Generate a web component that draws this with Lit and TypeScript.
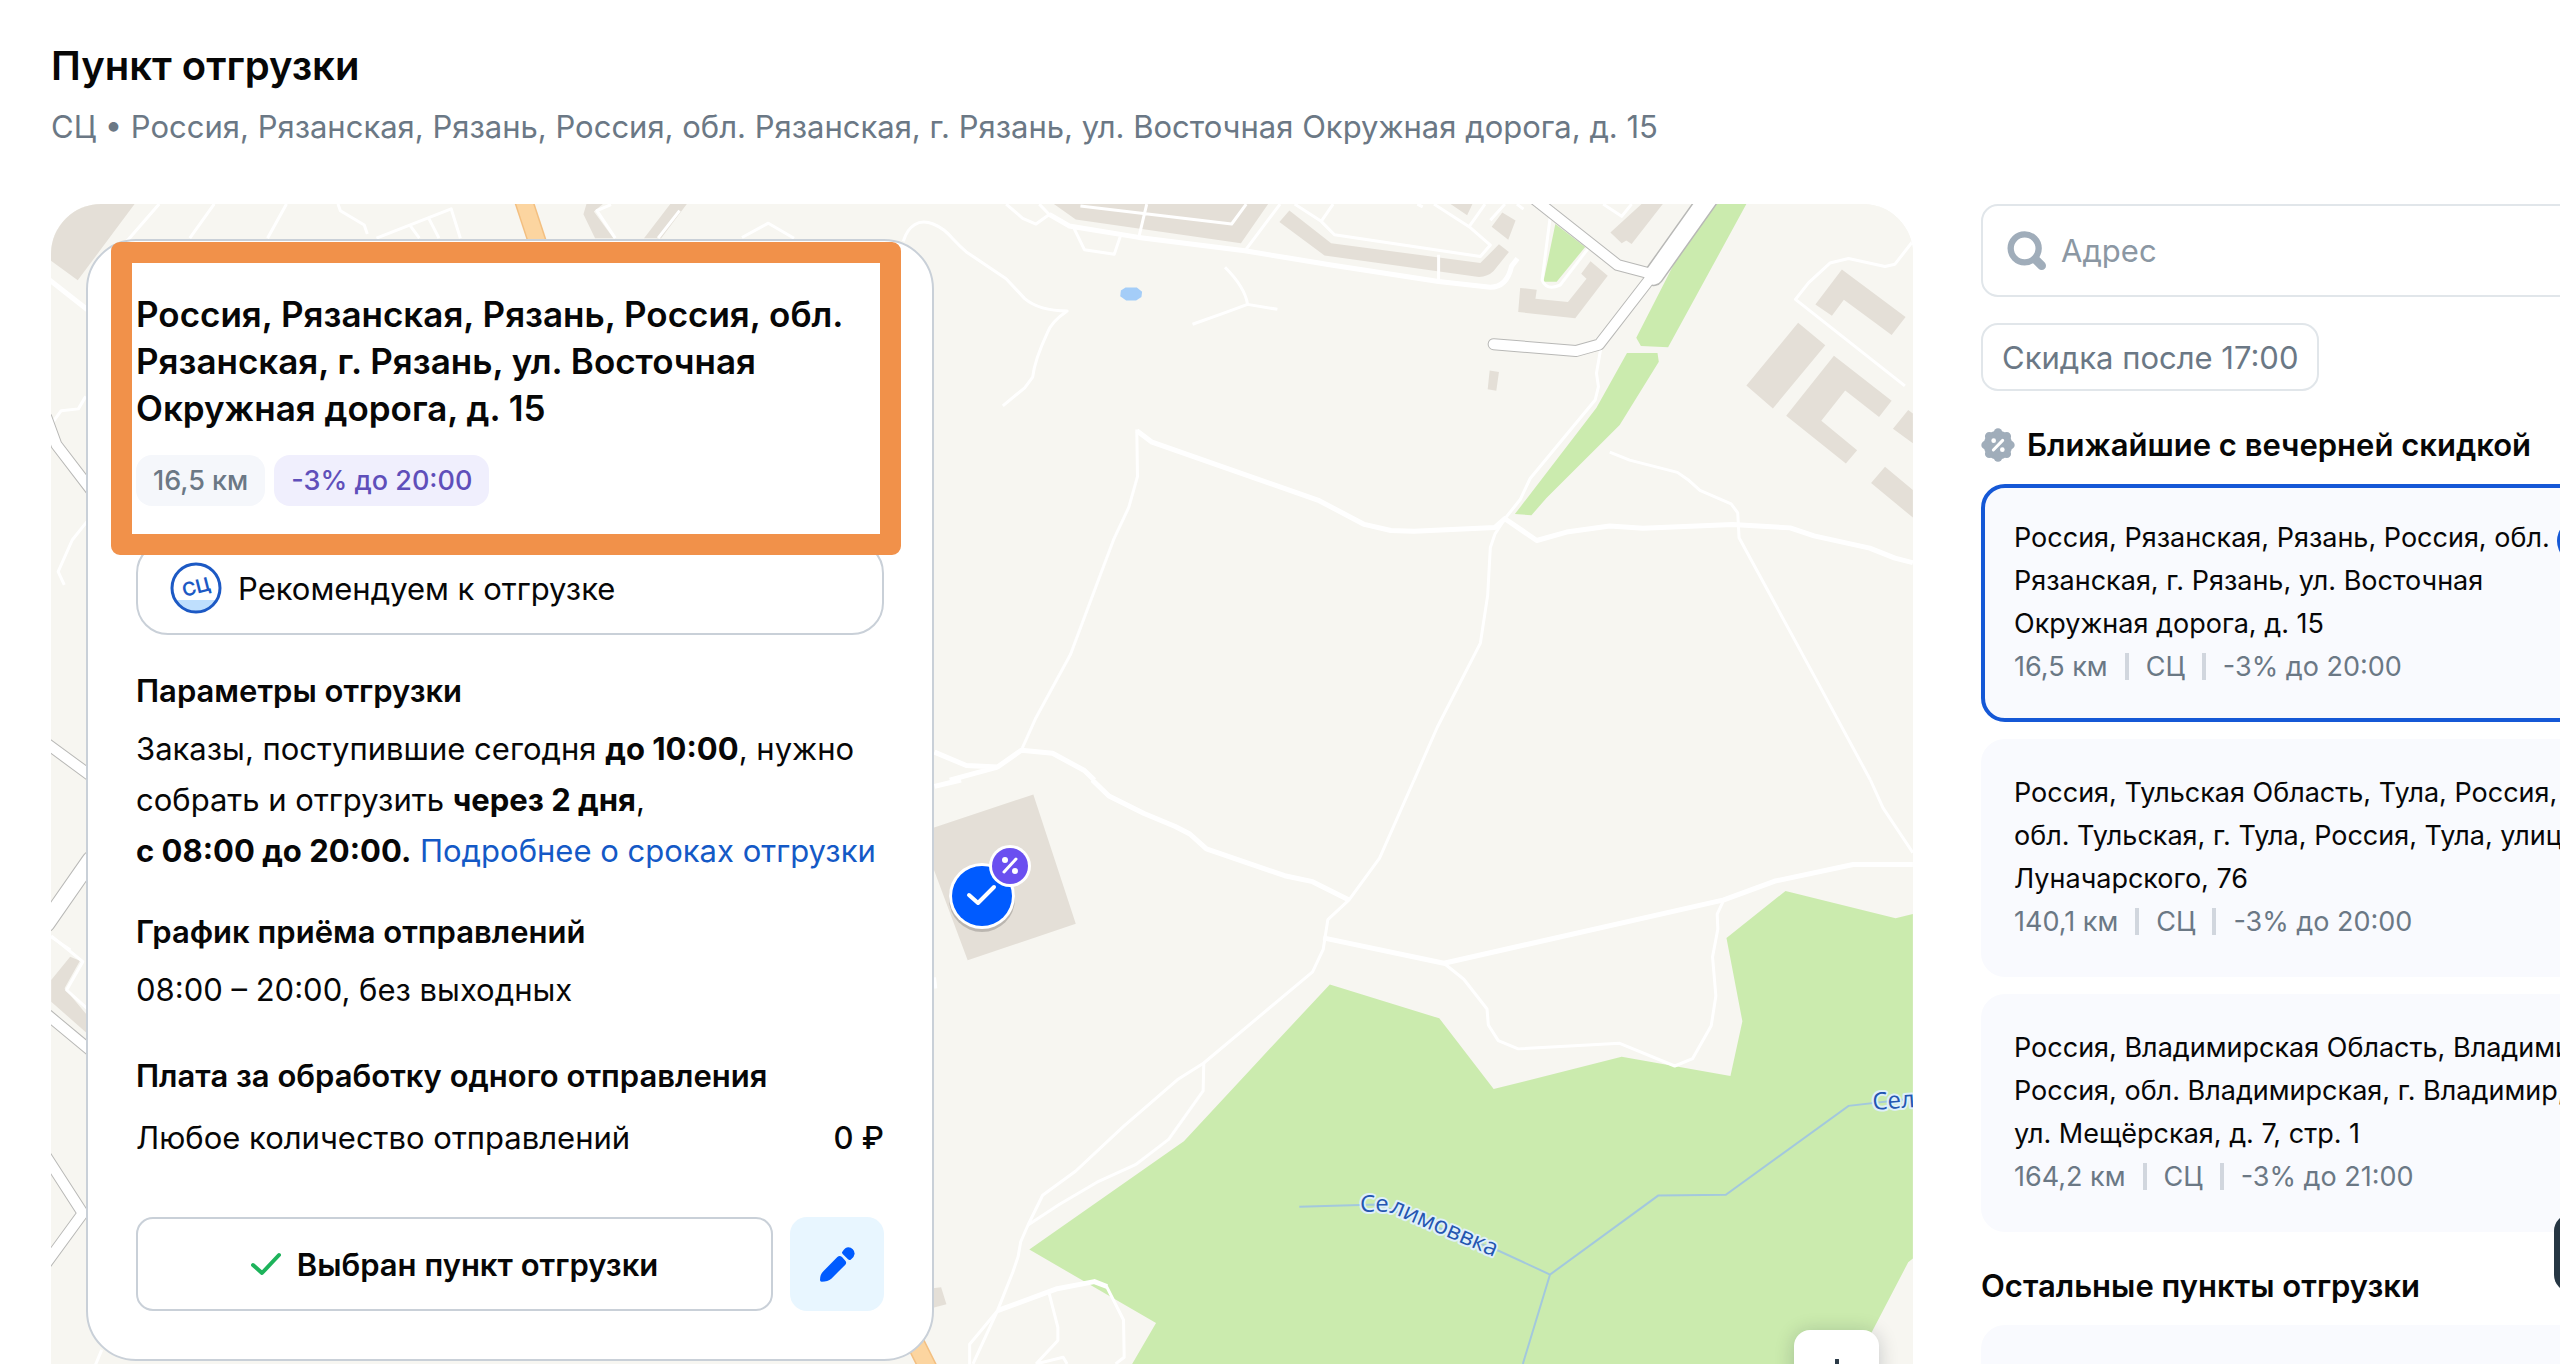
import {LitElement, html, svg, css, nothing} from "lit";
import {customElement, property, state} from "lit/decorators.js";
import {classMap} from "lit/directives/class-map.js";

interface Point {
  lines: string[];
  distance: string;
  discount: string;
}

const NEAREST: Point[] = [
  {
    lines: ["Россия, Рязанская, Рязань, Россия, обл.", "Рязанская, г. Рязань, ул. Восточная", "Окружная дорога, д. 15"],
    distance: "16,5 км",
    discount: "-3% до 20:00",
  },
  {
    lines: ["Россия, Тульская Область, Тула, Россия,", "обл. Тульская, г. Тула, Россия, Тула, улица", "Луначарского, 76"],
    distance: "140,1 км",
    discount: "-3% до 20:00",
  },
  {
    lines: ["Россия, Владимирская Область, Владимир,", "Россия, обл. Владимирская, г. Владимир,", "ул. Мещёрская, д. 7, стр. 1"],
    distance: "164,2 км",
    discount: "-3% до 21:00",
  },
];

/* Map tiles: each group carries its own coordinate grid. */
const PATHS_TOP = [
  "M5 160C12 120 28 100 50 115S75 150 100 188L160 258L188 310Q210 342 252 342Q228 370 222 400Q203 470 200 515L188 543L155 590",
  "M160 63L185 100L205 115L225 90L210 63",
  "M262 125L278 182L323 194L332 148M272 68L500 115L522 63M372 63L360 150M573 63L520 185",
  "M595 63L635 108L655 143L875 200L890 170L858 122L805 63M653 63L635 108M812 195L812 265M882 63L858 122M912 63L890 105M780 63L788 70M930 63L940 76",
  "M980 100L968 262Q975 290 995 275L1037 180M1060 63L1088 95L1103 63",
  "M490 228Q520 280 524 325L485 350L441 377M524 325L569 338",
  "M357 652L358 775L345 855L322 940L297 1055L257 1240L205 1405L183 1490",
  "M1057 435L1050 505L1053 540L1048 575L950 780L935 835L912 885L897 925L890 960L886 1085L875 1210L810 1430L775 1568",
  "M1070 711L1100 732L1172 764L1188 783L1206 811L1253 846L1263 870L1265 935L1320 1110L1378 1295L1463 1568",
  "M1527 160L1500 220L1485 226L1430 205L1402 217L1370 268L1350 312L1515 538",
];
const PATHS_TOP_WIDE = [
  "M225 90L255 120L360 150L520 185L650 222L812 265L890 280Q915 280 922 225L931 205",
  "M357 655L380 685L632 838L700 900L740 916L775 918L897 908L912 885L960 942L1005 920L1070 904L1120 910L1255 900L1342 909L1378 930L1462 962L1500 988L1527 1000",
  "M52 1495L100 1530L147 1534L183 1490L230 1498L278 1543L293 1568M147 1534L75 1568",
];
const PATHS_BOTTOM = [
  "M775 0L723 210L677 322L645 375L638 455L622 515L458 760L418 805L337 930L265 1050L215 1115L193 1195L182 1240L178 1280L170 1322L147 1425L110 1568",
  "M458 760L457 835L405 965L355 1033L297 1080L240 1140L193 1195",
  "M147 1425L105 1515L105 1568M225 1380L238 1470L238 1505L205 1568M205 1568L246 1550L252 1568M310 1355L337 1450L338 1550L325 1568",
  "M1463 0L1482 75L1527 195M52 530L54 560",
  "M820 492L850 535L885 615L887 658L902 700L932 722L1085 707L1168 768L1195 748L1223 660L1230 580L1225 475L1233 400L1232 360L1242 322",
];
const PATHS_BOTTOM_WIDE = [
  "M52 17L92 0M290 0L315 43L368 90L415 125L437 145L462 185L580 257L622 273L677 322",
  "M638 424L820 492L1242 322L1318 272L1437 227L1527 227",
  "M147 1425L237 1366L293 1347L312 1360",
];

@customElement("ship-map")
export class ShipMap extends LitElement {
  static styles = css`
    :host { display: block; }
    svg { display: block; width: 100%; height: 100%; }
    path { vector-effect: non-scaling-stroke; }
    .line { fill: none; stroke: #fff; stroke-width: 3px; stroke-linejoin: round; }
    .wide { fill: none; stroke: #fff; stroke-width: 5px; stroke-linejoin: round; }
    .edge { fill: none; stroke: #b8b8b6; stroke-linejoin: round; stroke-linecap: round; }
    .road { fill: none; stroke: #fff; stroke-linejoin: round; stroke-linecap: round; }
    .w-a { stroke-width: 21px; }
    .w-b { stroke-width: 18px; }
    .w-c { stroke-width: 12px; }
    .w-d { stroke-width: 10px; }
    .amber-edge { fill: none; stroke: #f3bf80; stroke-width: 19px; }
    .amber { fill: none; stroke: #fcd5a0; stroke-width: 16px; }
    .block { fill: #e4dfd7; }
    .wood { fill: #cbebae; }
    .pond { fill: #a4cdf8; }
    .stream { fill: none; stroke: #a3c8dd; stroke-width: 2px; }
    .river-name {
      font: 24px "Open Sans", "Noto Sans", sans-serif;
      fill: #2456b0;
      stroke: #dff0fa;
      stroke-width: 4px;
      stroke-linejoin: round;
      paint-order: stroke;
    }
  `;

  render() {
    return html`
      <svg viewBox="51 204 1862 1160" preserveAspectRatio="xMinYMin slice" aria-hidden="true">
        <rect x="51" y="204" width="1862" height="1160" fill="#f7f6f1"></rect>
        <g transform="scale(.6122 .3571)">
          <path class="block" d="M83 571L220 571L127 785L83 730Z M958 571L985 571L970 592L1002 667L972 667L953 600Z M1095 571L1122 571L1080 667L1052 667Z"></path>
          <path class="line" d="M260 571L205 680M350 571L310 667M468 571L437 667M552 571L556 590L595 630L600 655M615 667L737 585L752 667M670 632L685 667M700 610L717 667M998 573L975 590L1005 667M1075 667L1110 590M1212 665L1255 625L1297 667M140 1110L128 1145L100 1150L85 1185"></path>
          <path class="amber-edge" d="M855 560L880 690"></path>
          <path class="amber" d="M855 560L880 690"></path>
          <path class="wide" d="M78 780L145 870"></path>
          <path class="edge w-c" d="M76 1170L92 1245L150 1375"></path>
          <path class="road w-d" d="M76 1170L92 1245L150 1375"></path>
        </g>
        <g transform="translate(0 500) scale(.6122 .3333)">
          <path class="line" d="M142 65L118 120L95 215L105 255M83 1310L115 1350M1527 755L1568 790"></path>
          <path class="edge w-c" d="M76 730L150 830"></path>
          <path class="road w-d" d="M76 730L150 830"></path>
          <path class="edge w-b" d="M148 1080L76 1270"></path>
          <path class="road w-e" stroke-width="16" d="M148 1080L76 1270"></path>
        </g>
        <g transform="translate(0 900) scale(.7015 .3333)">
          <path class="block" d="M100 170L114 182L92 265L124 345L124 400L73 305L73 240Z"></path>
          <path class="line" d="M73 108L118 185L95 270L124 325M145 1350L135 1400"></path>
          <path class="edge w-c" d="M68 345L128 450M66 770L118 940M118 940L66 1090"></path>
          <path class="road w-d" d="M68 345L128 450M66 770L118 940M118 940L66 1090"></path>
        </g>
        <g transform="translate(900 180) scale(.6633 .3827)">
          <path class="block" d="M232 63L555 63L514 165L265 103Z M587 80L650 165L875 217L903 168L918 188L895 238Q885 255 870 253L640 197L572 110Z M830 63L863 63L855 92Z M908 85L928 106L917 156L892 122Z M1118 63L1150 63L1103 167L1095 158L1088 165L1071 137Z M935 282L960 287L958 310L1007 319L1035 258L1027 245L1041 212L1067 250L1018 361L932 345Z M889 498L903 502L899 551L886 547Z"></path>
          <path class="block" d="M1420 234L1516 358L1495 405L1423 313L1405 355L1380 325Z M1354 373L1395 432L1316 597L1276 537Z M1408 459L1495 577L1476 619L1425 550L1389 629L1443 706L1426 741L1336 616Z M1520 601L1527 610L1527 688L1497 650Z M1485 749L1527 810L1527 882L1464 792Z"></path>
          <path class="wood" d="M1232 63L1276 63L1158 437L1117 434L1110 412L1180 175Z M1096 452L1142 452L1144 475L1085 640L975 830L952 876L927 873L1050 595Z M988 115L1033 175L990 266L970 266Z"></path>
          <path class="pond" d="M340 281L357 281L365 292L364 306L356 315L341 315L332 304L333 289Z"></path>
          ${PATHS_TOP.map((d) => svg`<path class="line" d=${d}></path>`)}
          ${PATHS_TOP_WIDE.map((d) => svg`<path class="wide" d=${d}></path>`)}
          <path class="edge w-c" d="M895 429L1019 447L1054 430L1132 255"></path>
          <path class="edge w-c" d="M955 48L1082 222L1132 245"></path>
          <path class="edge w-a" d="M1222 40L1136 250"></path>
          <path class="road w-d" d="M895 429L1019 447L1054 430L1132 255"></path>
          <path class="road w-d" d="M955 48L1082 222L1132 245"></path>
          <path class="road w-b" d="M1222 40L1136 250"></path>
        </g>
        <g transform="translate(900 780) scale(.6633 .3724)">
          <path class="block" d="M30 140L201 39L265 386L102 484Z M40 1367L62 1362L70 1408L40 1422Z"></path>
          <path class="wood" d="M648 549L813 640L895 830L1088 743L1252 795L1270 648L1246 424L1335 298L1501 371L1527 360L1527 1285L1520 1295L1440 1568L350 1568L386 1458L195 1261L428 970L540 755Z"></path>
          <path class="stream" d="M602 1146L720 1140L900 1262L980 1328L1143 1116L1245 1114L1430 875L1527 855M980 1328L939 1568"></path>
          ${PATHS_BOTTOM.map((d) => svg`<path class="line" d=${d}></path>`)}
          ${PATHS_BOTTOM_WIDE.map((d) => svg`<path class="wide" d=${d}></path>`)}
        </g>
        <path class="amber-edge" d="M912 1336L934 1380"></path>
        <path class="amber" d="M912 1336L934 1380"></path>
        <path id="river" fill="none" d="M1360 1212L1384 1212Q1392 1213 1398 1216L1520 1268"></path>
        <text class="river-name"><textPath href="#river">Селимоввка</textPath></text>
        <text class="river-name" transform="translate(1873 1110) rotate(-4)">Селимоввка</text>

        <circle cx="982" cy="899" r="33" fill="#000" opacity=".18"></circle>
        <circle cx="982" cy="896" r="33" fill="#fff"></circle>
        <circle cx="982" cy="896" r="30" fill="#005bff"></circle>
        <path d="M969 895L978 903L994 887" fill="none" stroke="#fff" stroke-width="4" stroke-linecap="round" stroke-linejoin="round"></path>
        <circle cx="1010" cy="866" r="21" fill="#fff"></circle>
        <circle cx="1010" cy="866" r="18" fill="#6a4ff0"></circle>
        <path d="M1016 859L1004 872" stroke="#fff" stroke-width="3" stroke-linecap="round"></path>
        <circle cx="1005" cy="860" r="3" fill="#fff"></circle>
        <circle cx="1015" cy="871" r="3" fill="#fff"></circle>
      </svg>
    `;
  }
}

@customElement("point-card")
export class PointCard extends LitElement {
  @property({attribute: false}) point!: Point;
  @property({type: Boolean}) selected = false;

  static styles = css`
    :host { display: block; }
    .card {
      display: flex;
      justify-content: space-between;
      align-items: flex-start;
      width: 100%;
      box-sizing: border-box;
      padding: 28px 34px 30px 29px;
      border: 4px solid #f9fafe;
      border-radius: 24px;
      background: #f9fafe;
      color: #070707;
      font: 400 27px/43px Inter, "Liberation Sans", sans-serif;
      text-align: left;
      white-space: nowrap;
      cursor: pointer;
    }
    .selected { border-color: #1558d6; }
    .address { display: block; }
    .meta { display: flex; align-items: center; gap: 17px; color: #6b7885; }
    .bar { width: 4px; height: 27px; background: #d1d6de; }
    .mark { flex: none; width: 46px; height: 46px; margin-top: 2px; }
  `;

  render() {
    const {lines, distance, discount} = this.point;
    return html`
      <button type="button" class=${classMap({card: true, selected: this.selected})} aria-pressed=${this.selected}>
        <span>
          ${lines.map((line) => html`<span class="address">${line}</span>`)}
          <span class="meta">
            <span>${distance}</span><span class="bar"></span><span>СЦ</span><span class="bar"></span><span>${discount}</span>
          </span>
        </span>
        ${this.selected
          ? html`<svg class="mark" viewBox="0 0 46 46" aria-hidden="true">
              <circle cx="23" cy="23" r="23" fill="#1558d6"></circle>
              <path d="M14 23L20 30L32 17" fill="none" stroke="#fff" stroke-width="4" stroke-linecap="round" stroke-linejoin="round"></path>
            </svg>`
          : nothing}
      </button>
    `;
  }
}

@customElement("app-root")
export class AppRoot extends LitElement {
  @state() private query = "";

  static styles = css`
    :host {
      display: block;
      color: #070707;
      font: 400 31px/51px Inter, "Liberation Sans", sans-serif;
    }
    * { box-sizing: border-box; }
    h1, h2, h3, p, ul, dl, dd, dt { margin: 0; padding: 0; }
    button, input { font: inherit; color: inherit; }
    button { cursor: pointer; }
    svg { display: block; flex: none; }

    .page {
      display: flex;
      flex-direction: column;
      height: 100vh;
      padding: 42px 0 0 51px;
      overflow: hidden;
      position: relative;
      background: #fff;
    }
    .title { font-size: 40px; line-height: 48px; font-weight: 600; }
    .subtitle { margin: 15px 0 55px; line-height: 44px; color: #6b7885; white-space: nowrap; }
    .layout {
      flex: 1;
      min-height: 0;
      display: grid;
      grid-template-columns: minmax(0, 1fr) 660px;
      grid-template-rows: minmax(0, 1fr);
      gap: 68px;
      margin-right: -81px;
    }

    .map {
      position: relative;
      display: flex;
      align-items: flex-start;
      padding: 35px;
      border-radius: 50px 50px 0 0;
      overflow: hidden;
      background: #f7f6f1;
    }
    .canvas { position: absolute; inset: 0; }
    .zoom-in {
      position: absolute;
      right: 34px;
      top: 1126px;
      display: grid;
      place-items: center;
      width: 85px;
      height: 85px;
      padding: 0;
      border: 0;
      border-radius: 16px;
      background: #fff;
      box-shadow: 0 2px 20px rgba(0, 20, 40, 0.2);
    }

    .card {
      position: relative;
      width: 848px;
      padding: 50px 48px 48px;
      border: 2px solid #c9d0d8;
      border-radius: 50px;
      background: #fff;
    }
    .head { position: relative; }
    .frame {
      position: absolute;
      inset: -49px -17px -49px -25px;
      border: 21px solid #f1914a;
      border-radius: 9px;
      pointer-events: none;
    }
    .address { font-size: 35px; line-height: 47px; font-weight: 600; white-space: nowrap; }
    .tags { display: flex; gap: 9px; margin-top: 23px; }
    .tag {
      padding: 0 17px;
      border-radius: 16px;
      background: #f5f7fb;
      color: #6b7885;
      font-size: 27px;
      line-height: 51px;
      font-weight: 500;
    }
    .tag-sale { background: #f0effd; color: #5f4fba; }
    .advice {
      display: flex;
      align-items: center;
      gap: 16px;
      height: 94px;
      margin-top: 35px;
      padding: 0 32px;
      border: 2px solid #c9d0d8;
      border-radius: 32px;
    }
    .badge-text { font: 600 19px Inter, "Liberation Sans", sans-serif; fill: #1c59c4; }
    .section { margin-top: 30px; }
    .section h3 { font-size: 31px; font-weight: 600; margin-bottom: 7px; }
    .section p { white-space: nowrap; }
    .fee { margin-top: 35px; }
    .fee h3 { margin-bottom: 11px; }
    .row { display: flex; justify-content: space-between; }
    .price { font-weight: 500; }
    a { color: #1459c6; text-decoration: none; }
    .actions { display: flex; gap: 17px; margin-top: 54px; }
    .chosen {
      flex: 1;
      display: flex;
      align-items: center;
      justify-content: center;
      gap: 16px;
      height: 94px;
      border: 2px solid #c9d0d8;
      border-radius: 17px;
      background: #fff;
      font-weight: 600;
    }
    .edit {
      display: grid;
      place-items: center;
      width: 94px;
      height: 94px;
      padding: 0;
      border: 0;
      border-radius: 17px;
      background: #e8f6ff;
    }

    .side { display: flex; flex-direction: column; align-items: stretch; }
    .search {
      display: flex;
      align-items: center;
      gap: 14px;
      flex: none;
      height: 93px;
      padding: 0 24px;
      border: 2px solid #e1e6ea;
      border-radius: 17px;
    }
    .search input { flex: 1; min-width: 0; padding: 0; border: 0; outline: 0; background: none; }
    .search input::placeholder { color: #8b97a3; opacity: 1; }
    .filter {
      display: flex;
      align-items: center;
      align-self: flex-start;
      margin: 26px 0 28px;
      padding: 0 19px;
      height: 68px;
      flex: none;
      border: 2px solid #e1e6ea;
      border-radius: 17px;
      background: #fff;
      color: #6b7885;
    }
    .group { display: flex; align-items: center; gap: 12px; font-size: 31px; font-weight: 600; }
    .list { display: grid; gap: 17px; margin: 14px 0 28px; list-style: none; }
    .help {
      position: absolute;
      right: -72px;
      top: 1214px;
      width: 78px;
      height: 78px;
      border: 0;
      border-radius: 17px;
      background: #263643;
    }
  `;

  private onInput(event: InputEvent) {
    this.query = (event.target as HTMLInputElement).value;
  }

  render() {
    return html`
      <main class="page">
        <h1 class="title">Пункт отгрузки</h1>
        <p class="subtitle">СЦ • Россия, Рязанская, Рязань, Россия, обл. Рязанская, г. Рязань, ул. Восточная Окружная дорога, д. 15</p>

        <div class="layout">
          <section class="map">
            <ship-map class="canvas"></ship-map>
            <button class="zoom-in" type="button" aria-label="+">
              <svg width="28" height="28" viewBox="0 0 28 28" aria-hidden="true">
                <path d="M14 1V27M1 14H27" stroke="#2b3a47" stroke-width="4" stroke-linecap="round"></path>
              </svg>
            </button>

            <article class="card">
              <header class="head">
                <h2 class="address">Россия, Рязанская, Рязань, Россия, обл.<br />Рязанская, г. Рязань, ул. Восточная<br />Окружная дорога, д. 15</h2>
                <div class="tags">
                  <span class="tag">16,5 км</span>
                  <span class="tag tag-sale">-3% до 20:00</span>
                </div>
                <div class="frame"></div>
              </header>

              <div class="advice">
                <svg width="52" height="52" viewBox="0 0 52 52" aria-hidden="true">
                  <circle cx="26" cy="26" r="24" fill="#fff"></circle>
                  <path d="M5 38H47A24 24 0 0 1 5 38Z" fill="#bfdffd"></path>
                  <circle cx="26" cy="26" r="24" fill="none" stroke="#1c59c4" stroke-width="3"></circle>
                  <text class="badge-text" transform="translate(14 35) rotate(-14)">СЦ</text>
                </svg>
                <span>Рекомендуем к отгрузке</span>
              </div>

              <section class="section">
                <h3>Параметры отгрузки</h3>
                <p>
                  Заказы, поступившие сегодня <b>до 10:00</b>, нужно<br />собрать и отгрузить <b>через 2 дня</b>,<br /><b>с 08:00 до 20:00.</b>
                  <a href="#terms">Подробнее о сроках отгрузки</a>
                </p>
              </section>
              <section class="section">
                <h3>График приёма отправлений</h3>
                <p>08:00 – 20:00, без выходных</p>
              </section>
              <section class="section fee">
                <h3>Плата за обработку одного отправления</h3>
                <dl class="row">
                  <dt>Любое количество отправлений</dt>
                  <dd class="price">0 ₽</dd>
                </dl>
              </section>

              <div class="actions">
                <button class="chosen" type="button">
                  <svg width="30" height="24" viewBox="0 0 30 24" aria-hidden="true">
                    <path d="M2 13L11 21L28 3" fill="none" stroke="#1db35b" stroke-width="4" stroke-linecap="round" stroke-linejoin="round"></path>
                  </svg>
                  Выбран пункт отгрузки
                </button>
                <button class="edit" type="button" aria-label="Изменить">
                  <svg width="35" height="35" viewBox="0 0 105 105" fill="#005bff" aria-hidden="true">
                    <path d="M52 30Q59 24 66 30L76 41Q81 47 76 53L34 95Q24 104 5 104Q0 104 0 99Q0 82 10 73Z"></path>
                    <path d="M67 14Q76 1 85 1A19 19 0 0 1 104 20Q103 30 92 38Q88 41 84 37L68 21Q64 17 67 14Z"></path>
                  </svg>
                </button>
              </div>
            </article>
          </section>

          <aside class="side">
            <label class="search">
              <svg width="40" height="40" viewBox="0 0 120 120" aria-label="Поиск">
                <circle cx="53" cy="52" r="42" fill="none" stroke="#a0adba" stroke-width="19"></circle>
                <path d="M86 86L104 104" stroke="#a0adba" stroke-width="26" stroke-linecap="round"></path>
              </svg>
              <input type="text" placeholder="Адрес" .value=${this.query} @input=${this.onInput} />
            </label>
            <button class="filter" type="button">Скидка после 17:00</button>

            <h3 class="group">
              <svg width="34" height="34" viewBox="0 0 102 102" aria-hidden="true">
                <g fill="#a0adba">
                  <circle cx="51" cy="51" r="43"></circle>
                  ${[0, 45, 90, 135, 180, 225, 270, 315].map(
                    (angle) => svg`<circle cx="51" cy="14" r="13" transform="rotate(${angle} 51 51)"></circle>`,
                  )}
                </g>
                <path d="M37 66L65 37" stroke="#fff" stroke-width="9" stroke-linecap="round"></path>
                <circle cx="38" cy="38" r="7" fill="#fff"></circle>
                <circle cx="64" cy="65" r="7" fill="#fff"></circle>
              </svg>
              Ближайшие с вечерней скидкой
            </h3>
            <ul class="list">
              ${NEAREST.map((point, index) => html`<li><point-card .point=${point} ?selected=${index === 0}></point-card></li>`)}
            </ul>

            <h3 class="group">Остальные пункты отгрузки</h3>
            <ul class="list">
              <li><point-card .point=${NEAREST[1]}></point-card></li>
            </ul>
          </aside>
        </div>

        <button class="help" type="button" aria-label="Помощь"></button>
      </main>
    `;
  }
}
